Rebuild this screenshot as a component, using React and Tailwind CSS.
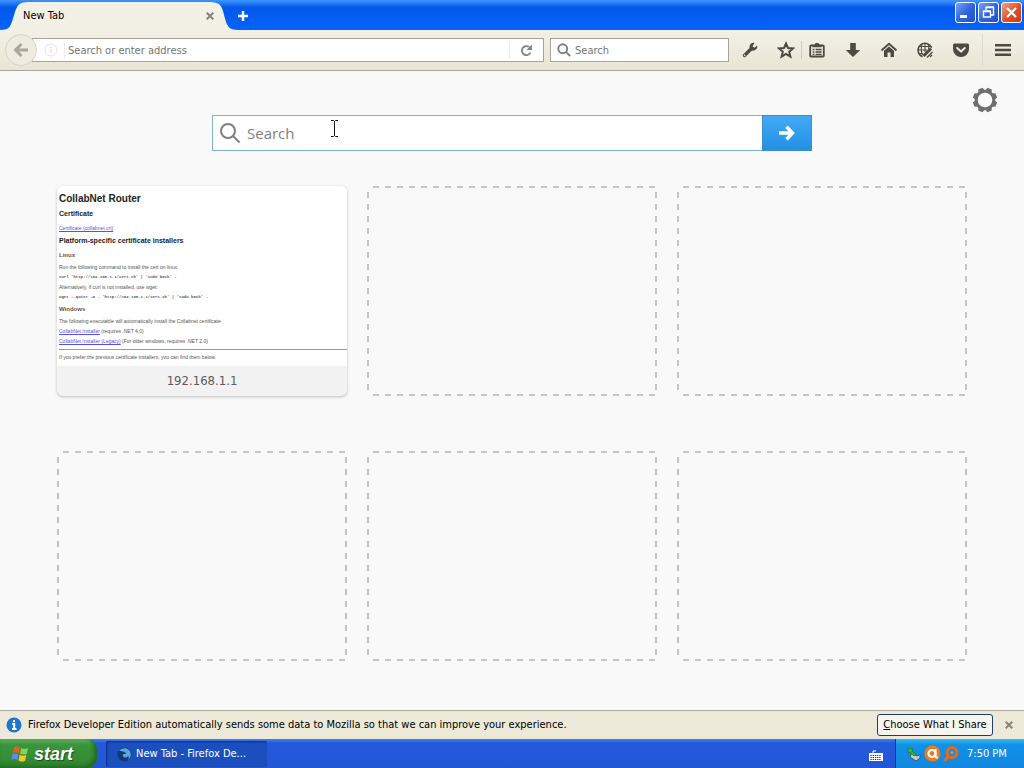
import React from "react";

const ui = "font-['DejaVu_Sans_Condensed','Noto_Sans',sans-serif]";

const Star = () => (
  <svg width="18" height="18" viewBox="0 0 18 18" fill="none" stroke="#4c4a42" strokeWidth="2" strokeLinejoin="miter">
    <path d="M9 2.5 11 7l5 .4-3.8 3.3 1.2 5L9 13l-4.400 2.700 1.200-5L2 7.400 7 7z" />
  </svg>
);

const Wrench = () => (
  <svg width="18" height="18" viewBox="0 0 18 18">
    <path d="M3.5 14.5 10 8" stroke="#4c4a42" strokeWidth="3.4" strokeLinecap="round" />
    <path d="M13.6 1.8a4.3 4.3 0 0 0-5 5.4l2.6 2.4a4.3 4.3 0 0 0 5-5.2l-2.8 2.4-1.9-1.6z" fill="#4c4a42" />
    <circle cx="3.6" cy="14.4" r=".8" fill="#ece9d8" />
  </svg>
);

const Clipboard = () => (
  <svg width="18" height="18" viewBox="0 0 18 18">
    <path d="M3 4.500h12a.8.8 0 0 1 .8.8v9.400a.8.8 0 0 1-.8.8H3a.8.8 0 0 1-.8-.8V5.300A.8.8 0 0 1 3 4.500z" fill="none" stroke="#4c4a42" strokeWidth="1.800" />
    <path d="M4.500 6.300V3.800h2.200L7.500 2h3l.8 1.800h2.200v2.500z" fill="#4c4a42" />
    <path d="M4.600 8.500h1.800M7.600 8.500h6M4.600 11h1.800M7.600 11h6M4.600 13.300h1.800M7.600 13.300h6" stroke="#4c4a42" strokeWidth="1.300" />
  </svg>
);

const Download = () => (
  <svg width="18" height="18" viewBox="0 0 18 18">
    <path d="M6.200 2h5.600v7h4.500L9 16 1.700 9h4.500z" fill="#4c4a42" />
  </svg>
);

const Home = () => (
  <svg width="18" height="18" viewBox="0 0 18 18">
    <path d="M1.500 9.500 9 2.8l7.500 6.700" fill="none" stroke="#4c4a42" strokeWidth="1.900" />
    <path d="M4 9.800 9 5.400l5 4.400V16h-3.500v-4.500h-3V16H4z" fill="#4c4a42" />
  </svg>
);

const Globe = () => (
  <svg width="18" height="18" viewBox="0 0 18 18" fill="none" stroke="#4c4a42">
    <path d="M6.500 15.800A7 7 0 1 1 15.600 6.800" strokeWidth="1.500" />
    <path d="M3 5.500h12M2 9h9M3 12.500h4M6 3c-1 4-1 8 .5 11M9 2v9M12 3c1 2 1 3 .8 5" strokeWidth="1.100" />
    <path d="M7.500 15 15 7.500" strokeWidth="3" />
    <path d="M11 16.500 16.500 11M14 16l2-2" strokeWidth="1.300" />
  </svg>
);

const Pocket = () => (
  <svg width="18" height="18" viewBox="0 0 18 18">
    <path d="M2.500 2.500h13a1.500 1.500 0 0 1 1.500 1.500v4a8 8 0 0 1-16 0V4a1.500 1.500 0 0 1 1.500-1.500z" fill="#4c4a42" />
    <path d="m5.200 7 3.800 3.600L12.800 7" fill="none" stroke="#f1efe3" strokeWidth="2" strokeLinecap="round" strokeLinejoin="round" />
  </svg>
);

const Magnifier = ({ size, width }) => (
  <svg width={size} height={size} viewBox="0 0 22 22" fill="none" stroke="#7f7f7f" strokeWidth={width} className="shrink-0">
    <circle cx="9" cy="9" r="7" />
    <path d="m14 14 6.500 6.500" />
  </svg>
);

const Cross = () => (
  <svg width="8" height="8" viewBox="0 0 8 8" stroke="#85857a" strokeWidth="2">
    <path d="m.7.7 6.600 6.600M7.300.7.7 7.300" />
  </svg>
);

const Gear = () => (
  <svg width="26" height="26" viewBox="-13 -13 26 26">
    {[22.5, 67.5, 112.5, 157.5, 202.5, 247.5, 292.5, 337.5].map((a) => (
      <path key={a} d="M-3.800-8-2.300-12.200h4.600L3.800-8z" fill="#6e6e6e" transform={`rotate(${a})`} />
    ))}
    <circle r="8.800" fill="none" stroke="#6e6e6e" strokeWidth="3" />
  </svg>
);

const tools = [
  ["Bookmarks list", Clipboard],
  ["Downloads", Download],
  ["Home", Home],
  ["Network", Globe],
  ["Pocket", Pocket],
];

function TitleBar() {
  return (
    <header className="flex h-[30px] items-end bg-linear-to-b from-[#3d95ff] via-[#0458ea] via-25% to-[#0364fb]">
      <div className="relative flex h-[28px] w-[238px] items-center pr-[24px] pl-[23px]">
        <svg className="absolute inset-0" width="238" height="28" viewBox="0 0 238 28">
          <path d="M0 28C10 28 11 24 14 13 17 3 19 0 28 0H210C219 0 222 3 224 13 227 25 229 28 238 28z" fill="#f3f1e6" />
        </svg>
        <span className="relative grow text-black">New Tab</span>
        <button aria-label="Close tab" className="relative"><Cross /></button>
      </div>
      <button aria-label="Open a new tab" className="mb-[8px] -ml-[1px]">
        <svg width="12" height="12" viewBox="0 0 12 12" stroke="#fff" strokeWidth="2.500"><path d="M6 1v10M1 6h10" /></svg>
      </button>
      <div className="mr-[2px] mb-[7px] ml-auto flex gap-[2px]">
        <button aria-label="Minimize" className="flex size-[21px] items-center justify-center rounded-[3px] border border-white bg-linear-to-br from-[#7aa0f5] via-[#3166e0] to-[#1e50d0]">
          <svg width="19" height="19" viewBox="0 0 19 19"><path d="M4 12h7v3H4z" fill="#fff" /></svg>
        </button>
        <button aria-label="Restore" className="flex size-[21px] items-center justify-center rounded-[3px] border border-white bg-linear-to-br from-[#7aa0f5] via-[#3166e0] to-[#1e50d0]">
          <svg width="19" height="19" viewBox="0 0 19 19" fill="none" stroke="#fff" strokeWidth="1.400"><path d="M7 7V4.500h7.500V12H12M7 4h8" /><path d="M4.500 8.500h7V14h-7zM4 8h8" /></svg>
        </button>
        <button aria-label="Close" className="flex size-[21px] items-center justify-center rounded-[3px] border border-white bg-linear-to-br from-[#f0a088] via-[#e2532c] to-[#c93a12]">
          <svg width="19" height="19" viewBox="0 0 19 19" stroke="#fff" strokeWidth="2.200"><path d="m5 5 9 9M14 5l-9 9" /></svg>
        </button>
      </div>
    </header>
  );
}

function NavBar() {
  return (
    <nav className="flex h-[41px] items-center border-b border-[#a9a797] bg-linear-to-b from-[#f3f1e6] to-[#e8e5d6] pl-[5px]">
      <button aria-label="Back" className="z-10 flex size-[32px] shrink-0 items-center justify-center rounded-full border border-[#d8d4c8] bg-[#eeebe0]">
        <svg width="16" height="16" viewBox="0 0 16 16" fill="none" stroke="#aaa69b" strokeWidth="3"><path d="M15 8H3M8.500 2 2.500 8l6 6" /></svg>
      </button>
      <div className="-ml-[5px] flex h-[24px] grow items-center border border-[#a6a598] bg-white pl-[11px]">
        <svg width="14" height="14" viewBox="0 0 14 14" fill="none" stroke="#e4e2dc" className="shrink-0"><circle cx="7" cy="7" r="6" /><path d="M7 6v4M7 3.500v1.500" strokeWidth="1.500" /></svg>
        <span className="ml-[6px] h-[16px] w-px bg-[#ecebe6]" />
        <input aria-label="Address" placeholder="Search or enter address" className="ml-[3px] min-w-0 grow pt-[2px] outline-none placeholder:text-[#757575]" />
        <span className="h-[16px] w-px bg-[#ecebe6]" />
        <button aria-label="Reload" className="mx-[10px]">
          <svg width="13" height="13" viewBox="0 0 13 13"><path d="M10.500 8.500A4.500 4.500 0 1 1 9 3" fill="none" stroke="#85857f" strokeWidth="1.800" /><path d="M12 .5V6H6.500z" fill="#85857f" /></svg>
        </button>
      </div>
      <div className="ml-[6px] flex h-[24px] w-[179px] items-center border border-[#a6a598] bg-white pl-[6px]">
        <Magnifier size={14} width={3} />
        <input aria-label="Search" placeholder="Search" className="ml-[4px] w-[140px] pt-[2px] outline-none placeholder:text-[#757575]" />
      </div>
      <button aria-label="Developer tools" className="ml-[12px]"><Wrench /></button>
      <button aria-label="Bookmark this page" className="ml-[18px]"><Star /></button>
      <span className="ml-[6px] h-[18px] w-px bg-[#cfccbd]" />
      <div className="ml-[6px] flex gap-[18px]">
        {tools.map(([label, Icon]) => (
          <button key={label} aria-label={label}><Icon /></button>
        ))}
      </div>
      <span className="ml-[12px] h-[32px] w-px bg-[#dedbcd]" />
      <button aria-label="Open menu" className="mr-[13px] ml-[12px]">
        <svg width="16" height="14" viewBox="0 0 16 14" fill="#4c4a42"><path d="M0 1h16v2.500H0zM0 5.800h16v2.500H0zM0 10.500h16V13H0z" /></svg>
      </button>
    </nav>
  );
}

function RouterPreview() {
  return (
    <div className="flex h-[180px] flex-col overflow-hidden bg-white pt-[6px] pl-[2px] font-['Liberation_Sans',sans-serif] text-[5px] leading-[10px] whitespace-nowrap text-[#555]">
      <h2 className="text-[10px] leading-[13px] font-bold text-[#222]">CollabNet Router</h2>
      <h3 className="mt-[4px] text-[7px] font-bold text-[#222]">Certificate</h3>
      <a href="#certificate" className="mt-[4px] self-start text-[#5a4eee] underline">Certificate (collabnet.crt)</a>
      <h3 className="mt-[3px] text-[7px] font-bold text-[#222]">Platform-specific certificate installers</h3>
      <h4 className="mt-[4px] text-[6px] font-bold">Linux</h4>
      <p className="mt-[2px]">Run the following command to install the cert on linux:</p>
      <p className="font-['Liberation_Mono',monospace] text-[4px] font-bold">curl 'http://192.168.1.1/cert.sh' | 'sudo bash' -</p>
      <p>Alternatively, if curl is not installed, use wget:</p>
      <p className="font-['Liberation_Mono',monospace] text-[4px] font-bold">wget --quiet -O - 'http://192.168.1.1/cert.sh' | 'sudo bash' -</p>
      <h4 className="mt-[2px] text-[6px] font-bold">Windows</h4>
      <p className="mt-[2px]">The following executable will automatically install the Collabnet certificate</p>
      <p><a href="#installer" className="text-[#5a4eee] underline">CollabNet Installer</a> (requires .NET 4.0)</p>
      <p><a href="#legacy" className="text-[#5a4eee] underline">CollabNet Installer (Legacy)</a> (For older windows, requires .NET 2.0)</p>
      <hr className="mt-[3px] border-[#999]" />
      <p className="mt-[2px]">If you prefer the previous certificate installers, you can find them below.</p>
    </div>
  );
}

function EmptyCell() {
  return (
    <div className="h-[210px] bg-[linear-gradient(90deg,#c4c4c4_50%,transparent_50%),linear-gradient(90deg,#c4c4c4_50%,transparent_50%),linear-gradient(180deg,#c4c4c4_50%,transparent_50%),linear-gradient(180deg,#c4c4c4_50%,transparent_50%)] [background-position:6px_0,6px_100%,0_6px,100%_6px] [background-repeat:repeat-x,repeat-x,repeat-y,repeat-y] [background-size:12px_2px,12px_2px,2px_12px,2px_12px]" />
  );
}

function NewTabPage() {
  return (
    <main className="flex grow flex-col bg-[#f9f9f9] px-[57px] pb-[49px]">
      <button aria-label="Customize" className="-mr-[31px] mt-[16px] self-end"><Gear /></button>
      <form className="mt-[2px] flex h-[36px] w-[600px] max-w-full self-center" onSubmit={(e) => e.preventDefault()}>
        <label className="relative flex grow items-center border border-r-0 border-[#7fb0cc] bg-white pl-[6px]">
          <Magnifier size={22} width={2} />
          <input aria-label="Search the web" placeholder="Search" className="ml-[6px] grow font-['Open_Sans','Noto_Sans',sans-serif] text-[15px] leading-[22px] outline-none placeholder:text-[#808080]" />
          <svg className="absolute top-[4px] left-[117px]" width="9" height="17" viewBox="0 0 9 17" fill="none" stroke="#111"><path d="M1 .5h2.500l1 1 1-1H8M4.500 1v15M1 16.500h2.500l1-1 1 1H8" /></svg>
        </label>
        <button aria-label="Submit search" className="flex w-[50px] items-center justify-center border border-[#3a8fd0] bg-linear-to-b from-[#42aaf5] to-[#2290e4]">
          <svg width="16" height="16" viewBox="0 0 16 16" fill="none" stroke="#fff" strokeWidth="3.400"><path d="M0 8h13M7.500 1.800 13.500 8l-6 6.200" /></svg>
        </button>
      </form>
      <div className="mt-[35px] grid grid-cols-3 gap-x-[20px] gap-y-[55px]">
        <article className="h-[210px] overflow-hidden rounded-[6px] bg-[#f2f2f2] shadow-[0_1px_3px_#00000040]">
          <RouterPreview />
          <h2 className="text-center text-[13px] leading-[30px] text-[#5c5c5c]">192.168.1.1</h2>
        </article>
        {[1, 2, 3, 4, 5].map((n) => <EmptyCell key={n} />)}
      </div>
    </main>
  );
}

function NoticeBar() {
  return (
    <aside className="flex h-[29px] items-center border-t border-[#aca899] bg-[#ece9d8] pr-[11px] pl-[6px] text-black">
      <svg width="16" height="16" viewBox="0 0 16 16"><circle cx="8" cy="8" r="7.500" fill="#1f76cf" /><path d="M8 3v2.200M6.200 7h2v4.800M6 12h4.500" fill="none" stroke="#fff" strokeWidth="2" /></svg>
      <p className="ml-[6px] grow">Firefox Developer Edition automatically sends some data to Mozilla so that we can improve your experience.</p>
      <button className="h-[22px] w-[116px] rounded-[3px] border border-[#1f3d66] bg-[#f6f5ef]"><u>C</u>hoose What I Share</button>
      <button aria-label="Dismiss" className="ml-[12px]"><Cross /></button>
    </aside>
  );
}

function Taskbar() {
  return (
    <footer className="flex h-[29px] bg-linear-to-b from-[#3b83f0] via-[#2459dc] via-15% to-[#2256d4] text-white">
      <button className="flex w-[97px] items-center gap-[4px] rounded-r-[10px] bg-linear-to-b from-[#62b162] via-[#3a963a] via-20% to-[#318531] pl-[11px] shadow-[inset_-3px_-2px_4px_#1f6a1f]">
        <svg width="19" height="18" viewBox="0 0 19 18">
          <path d="M3 2.500Q6 .5 9 2.500L7.800 8Q5 6.500 1.700 8z" fill="#ef5a28" />
          <path d="M10.200 3Q13.500 5 17 3l-1.300 5.700Q12 10.500 9 8.500z" fill="#8fd14a" />
          <path d="M1.400 9.300Q4.500 7.800 7.500 9.400L6.200 15Q3.500 13.300.2 14.800z" fill="#5b8df0" />
          <path d="M8.700 9.800Q12 11.700 15.400 10L14 15.700Q10.500 17.500 7.500 15.500z" fill="#fbc52c" />
        </svg>
        <span className="font-['Liberation_Sans',sans-serif] text-[18px] leading-[22px] font-bold italic [text-shadow:1px_1px_1px_#1c4d1c]">start</span>
      </button>
      <button className="mt-[2px] ml-[9px] flex h-[26px] w-[161px] items-center rounded-[2px] bg-[#1c4fbe] pl-[11px] shadow-[inset_1px_1px_2px_#0c2c80]">
        <svg width="15" height="15" viewBox="0 0 15 15"><circle cx="7.500" cy="7.500" r="7" fill="#123a78" /><path d="M2 4C4 1 9 0 12 3c3 3 2 8-1 10 1-2 1-3 0-4-1 2-4 2-5 0-1-1 1-3 3-2C9 5 6 4 2 4z" fill="#58a6df" /></svg>
        <span className="ml-[4px]">New Tab - Firefox De...</span>
      </button>
      <div className="ml-auto flex items-center">
        <svg className="mt-[4px] mr-[12px]" width="14" height="11" viewBox="0 0 14 11"><path d="M4 3V1h3" stroke="#fff" fill="none" /><path d="M0 3h14v8H0z" fill="#fff" /><path d="M1.500 5.500h11M1.500 7.500h11M1.500 9.500h11" stroke="#222" strokeDasharray="1.200 1" /></svg>
        <div className="flex h-full w-[129px] items-center border-l border-[#0b3d9c] bg-linear-to-b from-[#30bdf5] via-[#1290e8] via-20% to-[#1187df] pl-[10px]">
          <svg width="16" height="16" viewBox="0 0 16 16"><path d="m5 8 7 2 2-2v4l-4 3-6-4z" fill="#c6cbd0" stroke="#4b5660" /><path d="m2 2 5 1-1 2 4 3-2 2-4-4-2 1z" fill="#2dbb3a" stroke="#16702a" strokeWidth=".6" /></svg>
          <svg className="ml-[2px]" width="17" height="17" viewBox="0 0 17 17"><circle cx="8.500" cy="8.500" r="8" fill="#f07a18" /><circle cx="8" cy="8.500" r="3.500" fill="none" stroke="#fff" strokeWidth="2.200" /><path d="M11.500 4v7q0 2 2.500 1.500" fill="none" stroke="#fff" strokeWidth="2" /></svg>
          <svg className="ml-[2px]" width="16" height="16" viewBox="0 0 16 16" fill="none"><circle cx="9" cy="6.500" r="5" stroke="#e96a17" strokeWidth="3" /><circle cx="9" cy="6.500" r="1.500" fill="#f49035" /><path d="m5.500 10-4 5" stroke="#e96a17" strokeWidth="3" /></svg>
          <time className="ml-[8px]">7:50 PM</time>
        </div>
      </div>
    </footer>
  );
}

export default function App() {
  return (
    <div className={`flex min-h-screen flex-col text-[11px] leading-[14px] ${ui}`}>
      <TitleBar />
      <NavBar />
      <NewTabPage />
      <NoticeBar />
      <Taskbar />
    </div>
  );
}
